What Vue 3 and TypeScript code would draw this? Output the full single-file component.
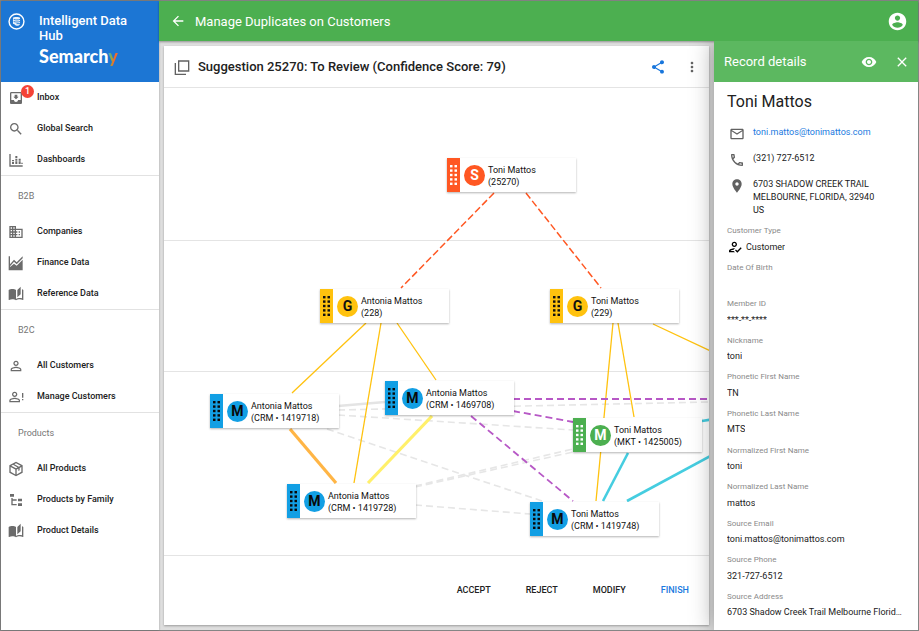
<script setup lang="ts">
interface NavItem {
  label: string
  icon: string
  badge?: number
}

interface NavGroup {
  title?: string
  items: NavItem[]
}

interface GraphNode {
  x: number
  y: number
  kind: 'suggestion' | 'golden' | 'master' | 'market'
  letter: string
  name: string
  detail: string
}

interface Edge {
  from: [number, number]
  to: [number, number]
  kind: string
}

interface Field {
  label: string
  value: string
  icon?: string
}

const icons: Record<string, string> = {
  back: 'M20 11H7.83l5.59-5.59L12 4l-8 8 8 8 1.41-1.41L7.83 13H20v-2z',
  account:
    'M12 2C6.48 2 2 6.48 2 12s4.48 10 10 10 10-4.48 10-10S17.52 2 12 2zm0 3c1.66 0 3 1.34 3 3s-1.34 3-3 3-3-1.34-3-3 1.34-3 3-3zm0 14.2c-2.5 0-4.71-1.28-6-3.22.03-1.99 4-3.08 6-3.08 1.99 0 5.97 1.09 6 3.08-1.29 1.94-3.5 3.22-6 3.22z',
  share:
    'M18 16.08c-.76 0-1.44.3-1.96.77L8.91 12.7c.05-.23.09-.46.09-.7s-.04-.47-.09-.7l7.05-4.11c.54.5 1.25.81 2.04.81 1.66 0 3-1.34 3-3s-1.34-3-3-3-3 1.34-3 3c0 .24.04.47.09.7L8.04 9.81C7.5 9.31 6.79 9 6 9c-1.66 0-3 1.34-3 3s1.34 3 3 3c.79 0 1.5-.31 2.04-.81l7.12 4.16c-.05.21-.08.43-.08.65 0 1.61 1.31 2.92 2.92 2.92s2.92-1.31 2.92-2.92-1.31-2.92-2.92-2.92z',
  more: 'M12 8c1.1 0 2-.9 2-2s-.9-2-2-2-2 .9-2 2 .9 2 2 2zm0 2c-1.1 0-2 .9-2 2s.9 2 2 2 2-.9 2-2-.9-2-2-2zm0 6c-1.1 0-2 .9-2 2s.9 2 2 2 2-.9 2-2-.9-2-2-2z',
  eye: 'M12 4.5C7 4.5 2.73 7.61 1 12c1.73 4.39 6 7.5 11 7.5s9.27-3.11 11-7.5c-1.73-4.39-6-7.5-11-7.5zM12 17c-2.76 0-5-2.24-5-5s2.24-5 5-5 5 2.24 5 5-2.24 5-5 5zm0-8c-1.66 0-3 1.34-3 3s1.34 3 3 3 3-1.34 3-3-1.34-3-3-3z',
  close:
    'M19 6.41L17.59 5 12 10.59 6.41 5 5 6.41 10.59 12 5 17.59 6.41 19 12 13.41 17.59 19 19 17.59 13.41 12z',
  stack: 'M6 2h17v17H6zM8 4v13h13V4zM1 6h2v16h15v2H1z',
  inbox:
    'M19 3H4.99c-1.11 0-1.98.9-1.98 2L3 19c0 1.1.88 2 1.99 2H19c1.1 0 2-.9 2-2V5c0-1.1-.9-2-2-2zm0 12h-4c0 1.66-1.35 3-3 3s-3-1.34-3-3H4.99V5H19v10zm-3-5h-2V7h-4v3H8l4 4 4-4z',
  search:
    'M15.5 14h-.79l-.28-.27C15.41 12.59 16 11.11 16 9.5 16 5.91 13.09 3 9.5 3S3 5.91 3 9.5 5.91 16 9.5 16c1.61 0 3.09-.59 4.23-1.57l.27.28v.79l5 4.99L20.49 19l-4.99-5zm-6 0C7.01 14 5 11.99 5 9.5S7.01 5 9.5 5 14 7.01 14 9.5 11.99 14 9.5 14z',
  dashboard:
    'M2 3h2v17h18v2H2zM6 12h3v2H6zM6 15h3v3H6zM11 6h3v3h-3zM11 10h3v3h-3zM11 14h3v4h-3zM16 10h3v3h-3zM16 14h3v4h-3zM20 16h2v2h-2z',
  company:
    'M18 15h-2v2h2zM18 11h-2v2h2zM20 19h-8v-2h2v-2h-2v-2h2v-2h-2V9h8zM10 7H8V5h2zM10 11H8V9h2zM10 15H8v-2h2zM10 19H8v-2h2zM6 7H4V5h2zM6 11H4V9h2zM6 15H4v-2h2zM6 19H4v-2h2zM12 7V3H2v18h20V7z',
  finance:
    'M1 2h2v12l6-7 4 4 9-9v3l-9 9-4-4-6 7v1l6-5 4 3 9-9v16H1z',
  book: 'M19 1l-5 5v11l5-4.5V1zM1 6v14.65c0 .25.25.5.5.5.1 0 .15-.05.25-.05C3.1 20.45 5.05 20 6.5 20c1.95 0 4.05.4 5.5 1.5V6c-1.45-1.1-3.55-1.5-5.5-1.5S2.45 4.9 1 6zm22 13.5V6c-.6-.45-1.25-.75-2-1v13.5c-1.1-.35-2.3-.5-3.5-.5-1.7 0-4.15.65-5.5 1.5v2c1.35-.85 3.8-1.5 5.5-1.5 1.65 0 3.35.3 4.75 1.05.1.05.15.05.25.05.25 0 .5-.25.5-.5v-1.1z',
  person:
    'M12 5.9c1.16 0 2.1.94 2.1 2.1s-.94 2.1-2.1 2.1S9.9 9.16 9.9 8s.94-2.1 2.1-2.1m0 9c2.97 0 6.1 1.46 6.1 2.1v1.1H5.9V17c0-.64 3.13-2.1 6.1-2.1M12 4C9.79 4 8 5.79 8 8s1.79 4 4 4 4-1.79 4-4-1.79-4-4-4zm0 9c-2.67 0-8 1.34-8 4v3h16v-3c0-2.66-5.33-4-8-4z',
  personAlert:
    'M10 5.9c1.16 0 2.1.94 2.1 2.1s-.94 2.1-2.1 2.1S7.9 9.16 7.9 8s.94-2.1 2.1-2.1m0 9c2.97 0 6.1 1.46 6.1 2.1v1.1H3.9V17c0-.64 3.13-2.1 6.1-2.1M10 4C7.79 4 6 5.79 6 8s1.79 4 4 4 4-1.79 4-4-1.79-4-4-4zm0 9c-2.67 0-8 1.34-8 4v3h16v-3c0-2.66-5.33-4-8-4zM21 6h2v7h-2zM21 15h2v2h-2z',
  box: 'M12 1l10 5.5v11L12 23 2 17.5v-11zM4 9v7.3l7 3.9v-7.3zM20 9l-2.5 1.4v3.6l-2 1v-3.5L13 12.9v7.3l7-3.9zM12 3.3L9.5 4.7l6.8 3.8L19 7zM7.5 5.8L5 7l7 4 2.3-1.3z',
  tree: 'M3 3h6v4H3zM15 10h6v4h-6zM15 17h6v4h-6zM13 13H7v5h6v2H5V9h2v2h6z',
  mail: 'M22 6c0-1.1-.9-2-2-2H4c-1.1 0-2 .9-2 2v12c0 1.1.9 2 2 2h16c1.1 0 2-.9 2-2V6zm-2 0l-8 5-8-5h16zm0 12H4V8l8 5 8-5v10z',
  phone:
    'M6.54 5c.06.89.21 1.76.45 2.59l-1.2 1.2c-.41-1.2-.67-2.47-.76-3.79h1.51m9.86 12.02c.85.24 1.72.39 2.6.45v1.49c-1.32-.09-2.59-.35-3.8-.75l1.2-1.19M7.5 3H4c-.55 0-1 .45-1 1 0 9.39 7.61 17 17 17 .55 0 1-.45 1-1v-3.49c0-.55-.45-1-1-1-1.24 0-2.45-.2-3.57-.57a.84.84 0 00-.31-.05c-.26 0-.51.1-.71.29l-2.2 2.2a15.149 15.149 0 01-6.59-6.59l2.2-2.2c.28-.28.36-.67.25-1.02A11.36 11.36 0 018.5 4c0-.55-.45-1-1-1z',
  place:
    'M12 2C8.13 2 5 5.13 5 9c0 5.25 7 13 7 13s7-7.75 7-13c0-3.87-3.13-7-7-7zm0 9.5c-1.38 0-2.5-1.12-2.5-2.5s1.12-2.5 2.5-2.5 2.5 1.12 2.5 2.5-1.12 2.5-2.5 2.5z',
  verified:
    'M11 12c2.21 0 4-1.79 4-4s-1.79-4-4-4-4 1.79-4 4 1.79 4 4 4zm0-6c1.1 0 2 .9 2 2s-.9 2-2 2-2-.9-2-2 .9-2 2-2zM5 18c.2-.63 2.57-1.68 4.96-1.94l2.04-2c-.39-.04-.68-.06-1-.06-2.67 0-8 1.34-8 4v2h9l-2-2H5zm15.6-5.5l-5.13 5.17-2.07-2.08L12 17l3.47 3.5L22 13.91z',
}

const navGroups: NavGroup[] = [
  {
    items: [
      { label: 'Inbox', icon: 'inbox', badge: 1 },
      { label: 'Global Search', icon: 'search' },
      { label: 'Dashboards', icon: 'dashboard' },
    ],
  },
  {
    title: 'B2B',
    items: [
      { label: 'Companies', icon: 'company' },
      { label: 'Finance Data', icon: 'finance' },
      { label: 'Reference Data', icon: 'book' },
    ],
  },
  {
    title: 'B2C',
    items: [
      { label: 'All Customers', icon: 'person' },
      { label: 'Manage Customers', icon: 'personAlert' },
    ],
  },
  {
    title: 'Products',
    items: [
      { label: 'All Products', icon: 'box' },
      { label: 'Products by Family', icon: 'tree' },
      { label: 'Product Details', icon: 'book' },
    ],
  },
]

const nodes: GraphNode[] = [
  { x: 283, y: 70, kind: 'suggestion', letter: 'S', name: 'Toni Mattos', detail: '(25270)' },
  { x: 156, y: 201, kind: 'golden', letter: 'G', name: 'Antonia Mattos', detail: '(228)' },
  { x: 386, y: 201, kind: 'golden', letter: 'G', name: 'Toni Mattos', detail: '(229)' },
  { x: 46, y: 306, kind: 'master', letter: 'M', name: 'Antonia Mattos', detail: '(CRM • 1419718)' },
  { x: 221, y: 293, kind: 'master', letter: 'M', name: 'Antonia Mattos', detail: '(CRM • 1469708)' },
  { x: 123, y: 396, kind: 'master', letter: 'M', name: 'Antonia Mattos', detail: '(CRM • 1419728)' },
  { x: 409, y: 330, kind: 'market', letter: 'M', name: 'Toni Mattos', detail: '(MKT • 1425005)' },
  { x: 366, y: 414, kind: 'master', letter: 'M', name: 'Toni Mattos', detail: '(CRM • 1419748)' },
]

const edges: Edge[] = [
  { from: [174, 318], to: [221, 314], kind: 'strong' },
  { from: [174, 322], to: [545, 314], kind: 'weak' },
  { from: [174, 327], to: [409, 342], kind: 'weak' },
  { from: [163, 341], to: [378, 413], kind: 'weak' },
  { from: [251, 398], to: [409, 361], kind: 'weak' },
  { from: [251, 399], to: [409, 364], kind: 'weak' },
  { from: [251, 417], to: [366, 426], kind: 'weak' },
  { from: [330, 105], to: [237, 200], kind: 'suggested' },
  { from: [362, 105], to: [437, 200], kind: 'suggested' },
  { from: [202, 235], to: [128, 305], kind: 'golden' },
  { from: [217, 235], to: [190, 395], kind: 'golden' },
  { from: [233, 235], to: [272, 292], kind: 'golden' },
  { from: [449, 235], to: [432, 413], kind: 'golden' },
  { from: [454, 235], to: [470, 329], kind: 'golden' },
  { from: [489, 236], to: [600, 288], kind: 'golden' },
  { from: [126, 341], to: [172, 395], kind: 'orange' },
  { from: [268, 328], to: [204, 395], kind: 'yellow' },
  { from: [349, 311], to: [600, 311], kind: 'purple' },
  { from: [349, 323], to: [409, 334], kind: 'purple' },
  { from: [307, 328], to: [409, 413], kind: 'purple' },
  { from: [464, 365], to: [439, 413], kind: 'cyan' },
  { from: [463, 413], to: [600, 339], kind: 'cyan' },
  { from: [538, 333], to: [600, 323], kind: 'cyan' },
]

const fields: Field[] = [
  { label: 'Customer Type', value: 'Customer', icon: 'verified' },
  { label: 'Date Of Birth', value: '' },
  { label: 'Member ID', value: '***-**-****' },
  { label: 'Nickname', value: 'toni' },
  { label: 'Phonetic First Name', value: 'TN' },
  { label: 'Phonetic Last Name', value: 'MTS' },
  { label: 'Normalized First Name', value: 'toni' },
  { label: 'Normalized Last Name', value: 'mattos' },
  { label: 'Source Email', value: 'toni.mattos@tonimattos.com' },
  { label: 'Source Phone', value: '321-727-6512' },
  { label: 'Source Address', value: '6703 Shadow Creek Trail Melbourne Florid…' },
]
</script>

<template>
  <div class="app">
    <aside class="sidebar">
      <div class="brand">
        <svg class="brand-icon" viewBox="0 0 24 24" aria-hidden="true">
          <circle cx="12" cy="12" r="10.5" fill="none" stroke="currentColor" stroke-width="2" />
          <path d="M7 7c0-2 10-2 10 0v8c0 1-1 3-5 3-1 0-2-1-3-2l-2-1z" fill="currentColor" opacity=".9" />
          <path d="M8 9c3 1 6 1 9 0M8 12c3 1 6 1 9 0M12 15h5" fill="none" stroke="#1976d2" stroke-width="1.2" />
        </svg>
        <div class="brand-text">
          <h1>Intelligent Data Hub</h1>
          <div class="logo">Semarch<span class="logo-y">y</span></div>
        </div>
      </div>
      <nav>
        <section v-for="(group, i) in navGroups" :key="i" class="nav-group">
          <h2 v-if="group.title">{{ group.title }}</h2>
          <a v-for="item in group.items" :key="item.label" href="#" class="nav-item">
            <span class="nav-icon">
              <svg class="icon" viewBox="0 0 24 24" aria-hidden="true">
                <path :d="icons[item.icon]" fill-rule="evenodd" />
              </svg>
              <span v-if="item.badge" class="badge">{{ item.badge }}</span>
            </span>
            {{ item.label }}
          </a>
        </section>
      </nav>
    </aside>

    <div class="main">
      <header class="topbar">
        <button class="icon-button" aria-label="Back">
          <svg class="icon" viewBox="0 0 24 24"><path :d="icons.back" /></svg>
        </button>
        <span class="topbar-title">Manage Duplicates on Customers</span>
        <button class="icon-button" aria-label="Account">
          <svg class="icon icon-large" viewBox="0 0 24 24"><path :d="icons.account" fill-rule="evenodd" /></svg>
        </button>
      </header>

      <div class="content">
        <main class="stage">
          <div class="card">
            <div class="card-header">
              <svg class="icon stack" viewBox="0 0 24 24" aria-hidden="true">
                <path :d="icons.stack" fill-rule="evenodd" />
              </svg>
              <h2>Suggestion 25270: To Review (Confidence Score: 79)</h2>
              <button class="icon-button share" aria-label="Share">
                <svg class="icon" viewBox="0 0 24 24"><path :d="icons.share" /></svg>
              </button>
              <button class="icon-button" aria-label="More">
                <svg class="icon" viewBox="0 0 24 24"><path :d="icons.more" /></svg>
              </button>
            </div>

            <div class="canvas">
              <div class="lane"></div>
              <div class="lane"></div>
              <div class="lane"></div>
              <svg class="edges" aria-hidden="true">
                <line
                  v-for="(edge, i) in edges"
                  :key="i"
                  :x1="edge.from[0]"
                  :y1="edge.from[1]"
                  :x2="edge.to[0]"
                  :y2="edge.to[1]"
                  :class="['edge', edge.kind]"
                />
              </svg>
              <div
                v-for="node in nodes"
                :key="node.detail"
                :class="['node', node.kind]"
                :style="{ left: node.x + 'px', top: node.y + 'px' }"
              >
                <div class="handle">
                  <svg class="grip" viewBox="0 0 7 20" aria-hidden="true">
                    <template v-for="row in 5" :key="row">
                      <rect x="0" :y="(row - 1) * 4.4" width="2.5" height="2.4" />
                      <rect x="4.5" :y="(row - 1) * 4.4" width="2.5" height="2.4" />
                    </template>
                  </svg>
                </div>
                <span class="letter">{{ node.letter }}</span>
                <div class="node-text">
                  <div>{{ node.name }}</div>
                  <div>{{ node.detail }}</div>
                </div>
              </div>
            </div>

            <div class="actions">
              <button>ACCEPT</button>
              <button>REJECT</button>
              <button>MODIFY</button>
              <button class="primary">FINISH</button>
            </div>
          </div>
        </main>

        <aside class="details">
          <div class="details-header">
            <span>Record details</span>
            <button class="icon-button" aria-label="View">
              <svg class="icon" viewBox="0 0 24 24"><path :d="icons.eye" fill-rule="evenodd" /></svg>
            </button>
            <button class="icon-button" aria-label="Close">
              <svg class="icon" viewBox="0 0 24 24"><path :d="icons.close" /></svg>
            </button>
          </div>
          <div class="details-body">
            <h2>Toni Mattos</h2>
            <div class="contacts">
              <div class="contact">
                <svg class="icon" viewBox="0 0 24 24" aria-hidden="true"><path :d="icons.mail" fill-rule="evenodd" /></svg>
                <a href="#">toni.mattos@tonimattos.com</a>
              </div>
              <div class="contact">
                <svg class="icon" viewBox="0 0 24 24" aria-hidden="true"><path :d="icons.phone" fill-rule="evenodd" /></svg>
                <span>(321) 727-6512</span>
              </div>
              <div class="contact">
                <svg class="icon" viewBox="0 0 24 24" aria-hidden="true"><path :d="icons.place" fill-rule="evenodd" /></svg>
                <address>6703 SHADOW CREEK TRAIL<br />MELBOURNE, FLORIDA, 32940<br />US</address>
              </div>
            </div>
            <dl class="fields">
              <div v-for="field in fields" :key="field.label" class="field">
                <dt>{{ field.label }}</dt>
                <dd>
                  <svg v-if="field.icon" class="icon" viewBox="0 0 24 24" aria-hidden="true">
                    <path :d="icons[field.icon]" fill-rule="evenodd" />
                  </svg>
                  <span>{{ field.value }}</span>
                </dd>
              </div>
            </dl>
          </div>
        </aside>
      </div>
    </div>
  </div>
</template>

<style>
body {
  margin: 0;
}
</style>

<style scoped>
* {
  box-sizing: border-box;
}

.app {
  display: flex;
  min-height: 100vh;
  border: 1px solid #858585;
  background: #dedede;
  color: #212121;
  font-family: Roboto, 'Liberation Sans', sans-serif;
  font-size: 9px;
  line-height: 13px;
}

h1,
h2,
dl,
dd {
  margin: 0;
}

button {
  padding: 0;
  border: 0;
  background: none;
  color: inherit;
  font: inherit;
  cursor: pointer;
}

.icon {
  display: block;
  flex: none;
  width: 16px;
  height: 16px;
  fill: currentColor;
}

.icon-large {
  width: 21px;
  height: 21px;
}

.icon-button {
  flex: none;
}

/* Sidebar */
.sidebar {
  flex: none;
  width: 158px;
  background: #fff;
  box-shadow: 0 0 2px rgba(0, 0, 0, 0.3);
}

.brand {
  display: flex;
  gap: 14px;
  height: 81px;
  padding: 12px 20px 0 7px;
  background: #1c76d4;
  color: #fff;
}

.brand-icon {
  flex: none;
  width: 17px;
  height: 17px;
}

.brand h1 {
  font-size: 13px;
  font-weight: 500;
  line-height: 15px;
}

.logo {
  font-family: Lato, 'Open Sans', sans-serif;
  font-size: 18px;
  font-weight: 900;
  line-height: 26px;
}

.logo-y {
  background: linear-gradient(100deg, #3fa9c9 15%, #8fae3c 42%, #f26b2c 62%);
  background-clip: text;
  color: transparent;
}

.nav-group h2 {
  height: 41px;
  padding-left: 17px;
  border-top: 1px solid #e2e2e2;
  color: #757575;
  font-size: 9px;
  font-weight: 400;
  line-height: 40px;
}

.nav-item {
  display: flex;
  align-items: center;
  gap: 13px;
  height: 31px;
  padding-left: 7px;
  color: #212121;
  font-weight: 500;
  text-decoration: none;
}

.nav-icon {
  position: relative;
  color: #6b6b6b;
}

.badge {
  position: absolute;
  top: -5px;
  right: -10px;
  width: 13px;
  height: 13px;
  border-radius: 50%;
  background: #f44336;
  color: #fff;
  line-height: 13px;
  text-align: center;
}

/* Top bar */
.main {
  display: flex;
  flex: 1;
  flex-direction: column;
  min-width: 0;
}

.topbar {
  display: flex;
  z-index: 1;
  align-items: center;
  gap: 9px;
  height: 40px;
  padding: 0 10px 0 11px;
  background: #4caf50;
  box-shadow: 0 1px 2px rgba(0, 0, 0, 0.35);
  color: #fff;
}

.topbar-title {
  flex: 1;
  font-size: 13px;
}

.content {
  display: flex;
  flex: 1;
  min-height: 0;
  overflow: hidden;
}

/* Graph card */
.stage {
  display: flex;
  flex: 1;
  min-width: 0;
  padding: 5px;
}

.card {
  display: flex;
  flex: 1;
  flex-direction: column;
  min-width: 0;
  background: #fff;
  box-shadow: 0 1px 2px rgba(0, 0, 0, 0.3);
}

.card-header {
  display: flex;
  align-items: center;
  gap: 18px;
  height: 42px;
  padding: 0 9px 0 10px;
  border-bottom: 1px solid #e4e4e4;
}

.card-header h2 {
  flex: 1;
  margin-left: -10px;
  font-size: 13px;
  font-weight: 500;
  line-height: 16px;
}

.card-header .icon {
  color: #616161;
}

.card-header .share .icon {
  color: #1876dc;
}

.canvas {
  display: grid;
  position: relative;
  flex: 1;
  grid-template-rows: 153px 131px 1fr;
  min-height: 460px;
  overflow: hidden;
}

.lane {
  border-bottom: 1px solid #e4e4e4;
}

.edges {
  position: absolute;
  inset: 0;
  width: 100%;
  height: 100%;
}

.edge.weak {
  stroke: #e6e6e6;
  stroke-width: 1.6;
  stroke-dasharray: 7 4;
}

.edge.strong {
  stroke: #e4e4e4;
  stroke-width: 2.6;
}

.edge.suggested {
  stroke: #ff5722;
  stroke-width: 1.5;
  stroke-dasharray: 7 3;
}

.edge.golden {
  stroke: #ffc20e;
  stroke-width: 1.3;
}

.edge.orange {
  stroke: #ffb545;
  stroke-width: 3.2;
}

.edge.yellow {
  stroke: #fff06a;
  stroke-width: 3.2;
}

.edge.purple {
  stroke: #b758c6;
  stroke-width: 1.8;
  stroke-dasharray: 7 4;
}

.edge.cyan {
  stroke: #45cde0;
  stroke-width: 2.6;
}

.node {
  display: flex;
  position: absolute;
  align-items: center;
  width: 129px;
  height: 34px;
  background: #fff;
  box-shadow: 0 1px 2px rgba(0, 0, 0, 0.3);
}

.handle {
  display: flex;
  align-items: center;
  align-self: stretch;
  justify-content: center;
  width: 13px;
  background: var(--kind);
}

.grip {
  width: 7px;
  height: 20px;
  fill: var(--ink);
}

.letter {
  width: 21px;
  height: 21px;
  margin: 0 3px 0 4px;
  border-radius: 50%;
  background: var(--kind);
  color: var(--ink);
  font-size: 14px;
  font-weight: 700;
  line-height: 21px;
  text-align: center;
}

.node-text {
  padding-top: 1px;
  color: #111;
  line-height: 12px;
  white-space: nowrap;
}

.suggestion {
  --kind: #ff5722;
  --ink: #fff;
}

.golden {
  --kind: #ffc20e;
  --ink: #111;
}

.master {
  --kind: #129fe4;
  --ink: #0a0a0a;
}

.market {
  --kind: #4caf50;
  --ink: #fff;
}

.actions {
  display: flex;
  align-items: center;
  justify-content: flex-end;
  gap: 35px;
  height: 69px;
  padding-right: 20px;
}

.actions button {
  font-weight: 500;
}

.actions .primary {
  color: #1a7ae0;
}

/* Details panel */
.details {
  display: flex;
  flex: none;
  flex-direction: column;
  z-index: 2;
  width: 204px;
  background: #fff;
  box-shadow: 0 0 22px rgba(0, 0, 0, 0.36);
}

.details-header {
  display: flex;
  align-items: center;
  gap: 17px;
  height: 41px;
  padding: 0 8px 0 10px;
  background: #5cb860;
  color: #fff;
  font-size: 13px;
}

.details-header span {
  flex: 1;
}

.details-body {
  display: flex;
  flex: 1;
  flex-direction: column;
  padding: 10px 9px 10px 13px;
}

.details-body h2 {
  font-size: 16px;
  font-weight: 400;
  line-height: 20px;
}

.contacts {
  display: grid;
  gap: 13px;
  margin-top: 14px;
  padding-left: 2px;
}

.contact {
  display: flex;
  gap: 8px;
}

.contact .icon {
  margin-bottom: -3px;
  color: #616161;
}

.contact a {
  color: #1a7ae0;
  text-decoration: none;
}

.contact address {
  font-style: normal;
}

.fields {
  display: flex;
  flex: 1;
  flex-direction: column;
  justify-content: space-between;
  margin-top: 8px;
}

.field dt {
  color: #8a8a8a;
  font-size: 8px;
  line-height: 12px;
}

.field dd {
  display: flex;
  align-items: center;
  gap: 3px;
  height: 14px;
  margin-top: 3px;
}

.field dd span {
  overflow: hidden;
  text-overflow: ellipsis;
  white-space: nowrap;
}

.field dd .icon {
  color: #000;
}
</style>
